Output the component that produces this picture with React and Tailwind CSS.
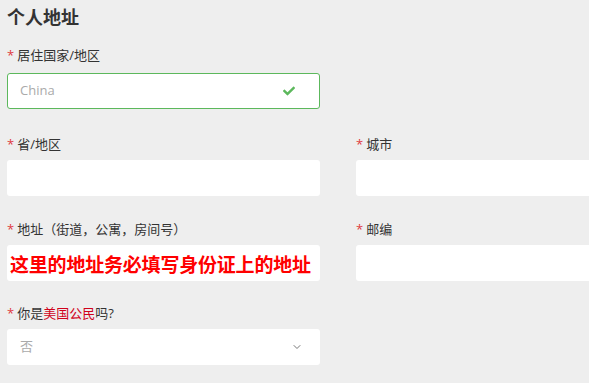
import { FaCheck } from 'react-icons/fa';
import { ChevronDown } from 'lucide-react';

const FONT = { fontFamily: '"Open Sans", "Noto Sans CJK SC", sans-serif' };

function Label({ children, gap = 'mb-[7px]' }) {
  return (
    <div className={`h-[18px] flex items-center text-[13px] leading-none text-[#333] ${gap}`}>
      <span className="text-[#e0393e] mr-[3px] text-[13px]">*</span>
      {children}
    </div>
  );
}

function Box({ children, className = '' }) {
  return (
    <div className={`h-[36px] bg-white rounded-[3px] flex items-center ${className}`}>
      {children}
    </div>
  );
}

export default function App() {
  return (
    <div className="w-[589px] h-[383px] bg-[#eeeeee] overflow-hidden" style={FONT}>
      <div className="pl-[7px] pt-[6px]">
        <h2 className="text-[18px] font-bold text-[#333] leading-[22px] mb-[18px]">个人地址</h2>

        <div className="grid grid-cols-[313px_313px] gap-x-[36px] w-[662px]">
          {/* country */}
          <div className="col-span-2 w-[313px] mb-[26px]">
            <Label gap="mb-[9px]">居住国家/地区</Label>
            <Box className="border border-[#5cb85c] px-[12px] justify-between">
              <span className="text-[13px] text-[#aaa]">China</span>
              <FaCheck className="w-[12px] h-[12px] text-[#5cb85c] mr-[12px]" />
            </Box>
          </div>

          {/* province / city */}
          <div className="mb-[24px]">
            <Label>省/地区</Label>
            <Box />
          </div>
          <div className="mb-[24px]">
            <Label>城市</Label>
            <Box />
          </div>

          {/* address / zip */}
          <div className="mb-[23px]">
            <Label>地址（街道，公寓，房间号）</Label>
            <Box className="pl-[3px] pt-[4px]">
              <span className="text-[19px] font-bold text-[#ff0000] leading-none whitespace-nowrap tracking-[-0.2px]">
                这里的地址务必填写身份证上的地址
              </span>
            </Box>
          </div>
          <div className="mb-[23px]">
            <Label>邮编</Label>
            <Box />
          </div>

          {/* citizen */}
          <div className="col-span-2 w-[313px]">
            <Label>
              你是<span className="text-[#d0021b]">美国公民</span>吗?
            </Label>
            <Box className="px-[13px] justify-between">
              <span className="text-[13px] text-[#aaa]">否</span>
              <ChevronDown className="w-[12px] h-[12px] text-[#777] mr-[4px]" strokeWidth={2} />
            </Box>
          </div>
        </div>
      </div>
    </div>
  );
}
